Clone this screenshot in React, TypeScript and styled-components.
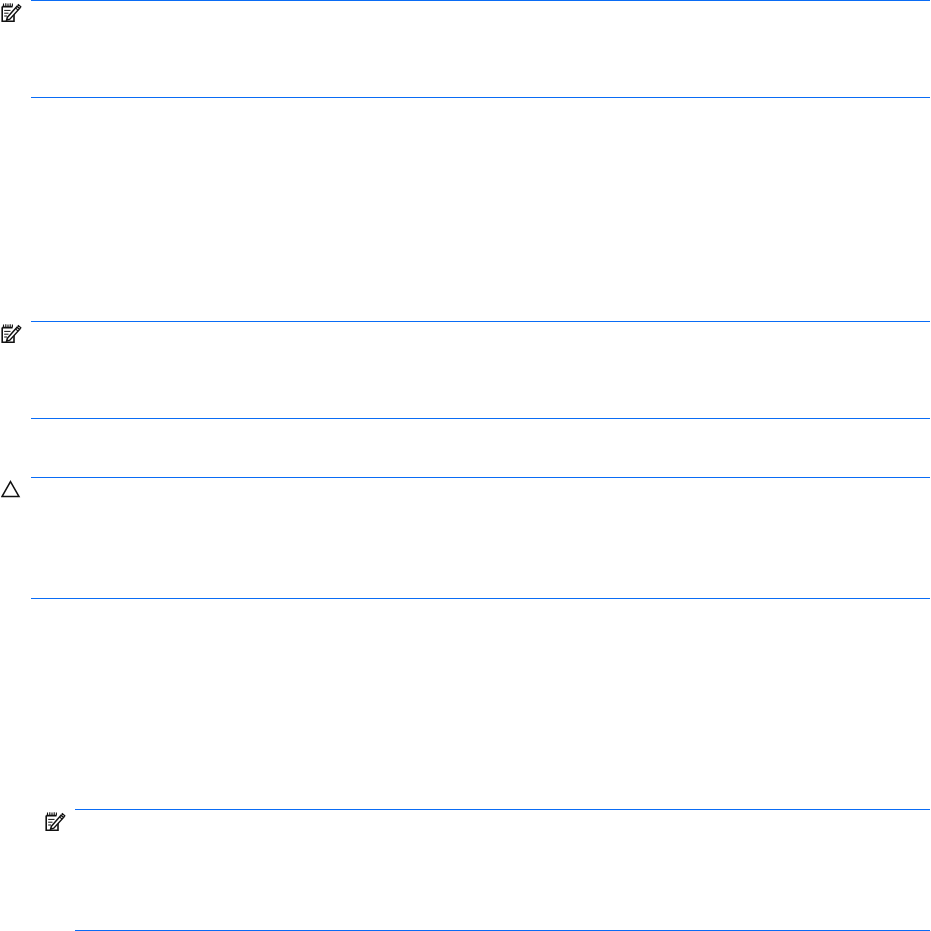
import styled, { createGlobalStyle } from "styled-components"

const GlobalStyle = createGlobalStyle`
  html, body {
    margin: 0;
    padding: 0;
    background: #fff;
    font-family: "Liberation Sans", Arial, sans-serif;
  }
`

const Page = styled.div`
  width: 930px;
  height: 931px;
  overflow: hidden;
  display: flex;
  flex-direction: column;
`

const NoteRow = styled.div<{ $top: number; $indent?: number; $height: number }>`
  display: flex;
  margin-top: ${(props) => props.$top}px;
  margin-left: ${(props) => props.$indent ?? 0}px;
  height: ${(props) => props.$height}px;
`

const IconSlot = styled.div`
  width: 31px;
  flex: none;
  padding: 2px 0 0 1px;
  box-sizing: border-box;
  svg {
    display: block;
  }
`

const NoteBody = styled.div`
  flex: 1;
  box-sizing: border-box;
  border-top: 1px solid #0a6cf5;
  border-bottom: 1px solid #0a6cf5;
`

const NoteIcon = () => (
  <svg width="21" height="21" viewBox="0 0 21 21" fill="none" stroke="#111">
    <path d="M1.2 4.6H11.5M1.2 4.6V19.2H13V11" strokeWidth="1.6" />
    <path d="M2.5 4.5V1.6M4.8 4.5V1.2M7 4.5V1.6M9.2 4.5V1.2M11.4 4.5V1.6" strokeWidth="1.1" />
    <path d="M3.2 8.4H9.5M3.2 11.2H7.5M3.2 14H6" strokeWidth="1" />
    <path d="M6.4 15.2L16 4.2L18.6 6.4L8.8 17.2L5.6 18.2Z" strokeWidth="1.5" fill="#fff" />
    <path d="M14.6 6L17.2 8.2" strokeWidth="1.1" />
    <path d="M16.6 3.6L17.4 2.6L19.8 4.8L19 5.8" strokeWidth="1.3" />
  </svg>
)

const CautionIcon = () => (
  <svg width="20" height="20" viewBox="0 0 20 20" fill="none" stroke="#111">
    <path d="M9.5 2.6L18 17.6H1Z" strokeWidth="1.5" />
  </svg>
)

export default function App() {
  return (
    <Page>
      <GlobalStyle />
      <NoteRow $top={0} $height={98}>
        <IconSlot><NoteIcon /></IconSlot>
        <NoteBody />
      </NoteRow>
      <NoteRow $top={223} $height={98}>
        <IconSlot><NoteIcon /></IconSlot>
        <NoteBody />
      </NoteRow>
      <NoteRow $top={58} $height={122}>
        <IconSlot><CautionIcon /></IconSlot>
        <NoteBody />
      </NoteRow>
      <NoteRow $top={210} $indent={44} $height={122}>
        <IconSlot><NoteIcon /></IconSlot>
        <NoteBody />
      </NoteRow>
    </Page>
  )
}
